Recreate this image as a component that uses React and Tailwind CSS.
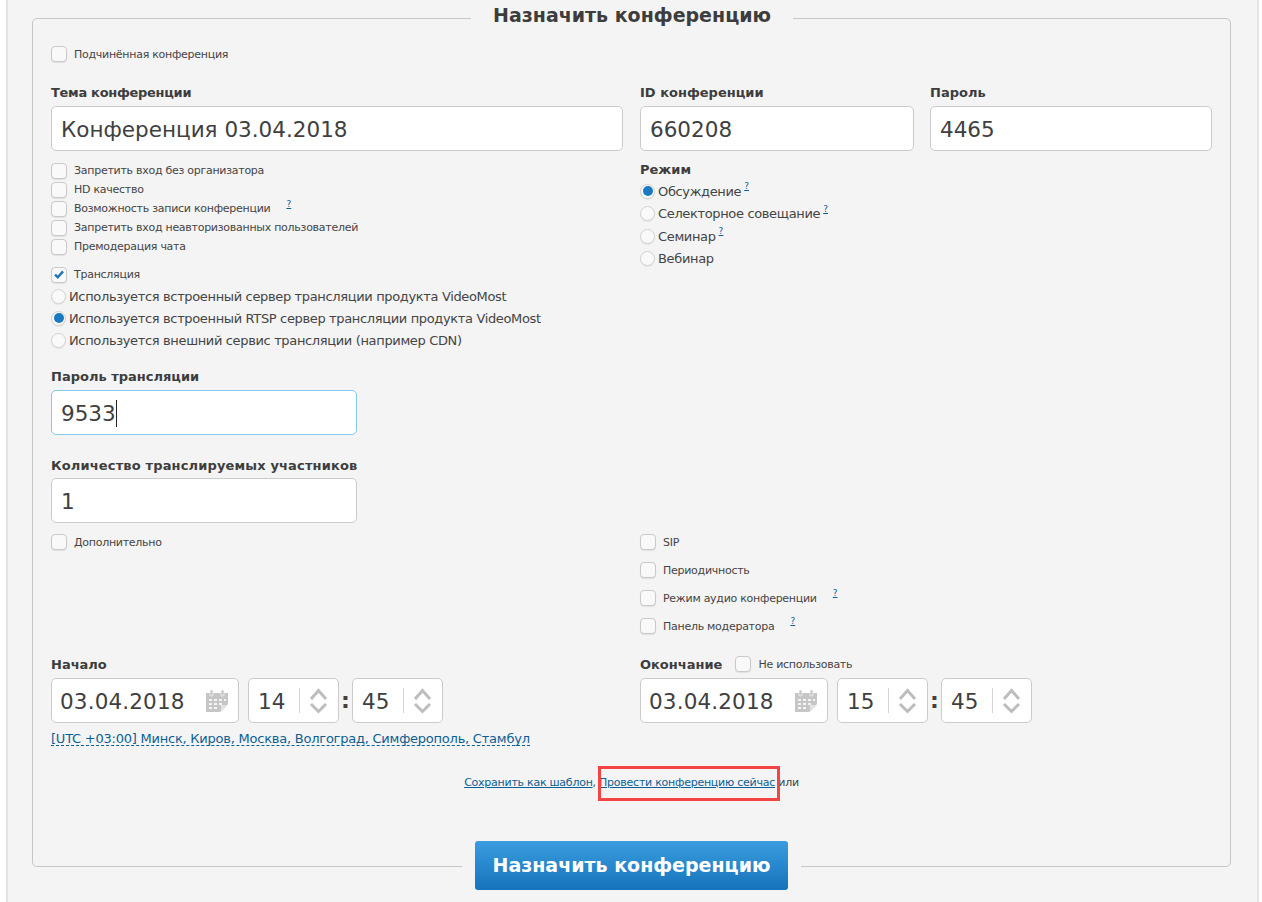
const font = { fontFamily: '"DejaVu Sans", Verdana, sans-serif' };

function Check({ label, checked, help, helpGap = 'ml-[16px]', h = 'h-[19px]' }) {
  return (
    <div className={`flex items-center ${h}`}>
      <span className="flex h-[16px] w-[16px] shrink-0 items-center justify-center rounded-[4px] border border-[#c9c9c9] bg-[#f9f9f9] shadow-[0_1px_1px_rgba(0,0,0,0.08)]">
        {checked && (
          <svg width="10" height="9" viewBox="0 0 10 9">
            <path d="M1 4.6 L3.8 7.2 L9 1.4" fill="none" stroke="#1c76bc" strokeWidth="2.4" />
          </svg>
        )}
      </span>
      <span className="ml-[7px] text-[11px] leading-none tracking-[-0.27px] text-[#444]">{label}</span>
      {help && <Help className={helpGap} />}
    </div>
  );
}

function Help({ className = '' }) {
  return <a className={`mb-[9px] text-[9px] leading-none text-[#0b5f96] underline ${className}`}>?</a>;
}

function Radio({ label, checked, help, h = 'h-[22px]' }) {
  return (
    <div className={`flex items-center ${h}`}>
      <span className="flex h-[15px] w-[15px] shrink-0 items-center justify-center rounded-full border border-[#d2d2d2] bg-[#f9f9f9] shadow-[0_1px_1px_rgba(0,0,0,0.06)]">
        {checked && <span className="h-[10px] w-[10px] rounded-full bg-[#1b79c2]" />}
      </span>
      <span className="ml-[3px] text-[13px] leading-none tracking-[-0.35px] text-[#444]">{label}</span>
      {help && <Help className="ml-[3px]" />}
    </div>
  );
}

function Label({ children, className = '' }) {
  return <div className={`h-[16px] text-[13px] font-bold leading-[18px] text-[#3d3d3d] ${className}`}>{children}</div>;
}

function Field({ value, className = '', caret, focused }) {
  return (
    <div
      className={`flex h-[45px] items-center rounded-[5px] border bg-white pl-[9px] pt-[4px] text-[21.5px] text-[#404040] ${
        focused ? 'border-[#85c9f2]' : 'border-[#cbcbcb]'
      } ${className}`}
    >
      {value}
      {caret && <span className="mb-[3px] h-[27px] w-px bg-[#222]" />}
    </div>
  );
}

function Calendar() {
  return (
    <svg width="24" height="24" viewBox="0 0 24 24" className="shrink-0">
      <path d="M1 4 H23 V15 L15 23 H1 Z" fill="#c6c6c6" />
      <path d="M16 23 L23 16 H16 Z" fill="#e2e2e2" />
      <rect x="5" y="1" width="3" height="6" rx="1" fill="#c6c6c6" stroke="#f4f4f4" strokeWidth="0.8" />
      <rect x="16" y="1" width="3" height="6" rx="1" fill="#c6c6c6" stroke="#f4f4f4" strokeWidth="0.8" />
      <path
        d="M4 10h3v2H4zM9 10h3v2H9zM14 10h3v2h-3zM19 10h2v2h-2zM4 14h3v2H4zM9 14h3v2H9zM14 14h3v2h-3zM4 18h3v2H4zM9 18h3v2H9z"
        fill="#f4f4f4"
      />
    </svg>
  );
}

function Spinner() {
  return (
    <svg width="19" height="26" viewBox="0 0 19 26" className="shrink-0">
      <path d="M2 11 L9.5 2.5 L17 11" fill="none" stroke="#bdbdbd" strokeWidth="3" />
      <path d="M2 16 L9.5 23.5 L17 16" fill="none" stroke="#bdbdbd" strokeWidth="3" />
    </svg>
  );
}

function Time({ value }) {
  return (
    <div className="flex h-[45px] w-[91px] items-center rounded-[5px] border border-[#cbcbcb] bg-white pl-[9px] text-[21.5px] text-[#404040]">
      <span className="w-[41px] pt-[3px]">{value}</span>
      <span className="h-[25px] w-px bg-[#d4d4d4]" />
      <span className="ml-[9px] flex">
        <Spinner />
      </span>
    </div>
  );
}

function DateTime({ date, h, m }) {
  return (
    <div className="mt-[6px] flex items-center">
      <div className="flex h-[45px] w-[188px] items-center justify-between rounded-[5px] border border-[#cbcbcb] bg-white pl-[8px] pr-[9px] text-[21.5px] tracking-[0.15px] text-[#404040]">
        <span className="pt-[3px]">{date}</span>
        <Calendar />
      </div>
      <span className="w-[9px]" />
      <Time value={h} />
      <span className="w-[13px] text-center text-[22px] font-bold leading-none text-[#404040]">:</span>
      <Time value={m} />
    </div>
  );
}

export default function App() {
  return (
    <div style={font} className="h-[902px] w-[1262px] overflow-hidden bg-white">
      <div className="ml-[6px] mr-[3px] h-[902px] border-x-2 border-[#e4e4e4] bg-[#f4f4f4] pt-[18px] pl-[24px]">
        <div className="relative h-[849px] w-[1199px] rounded-[5px] border border-[#c6c6c6] px-[18px] pt-[27px]">
          <div className="absolute -top-[17px] left-[438px] bg-[#f4f4f4] px-[22px] text-[19px] font-bold leading-[26px] text-[#3d3d3d]">
            Назначить конференцию
          </div>

          <Check label="Подчинённая конференция" h="h-[16px]" />

          <div className="mt-[22px] flex">
            <div className="w-[572px]">
              <Label className="tracking-[-0.3px]">Тема конференции</Label>
              <Field value="Конференция 03.04.2018" className="mt-[6px] w-[572px]" />
              <div className="mt-[10px]">
                <Check label="Запретить вход без организатора" />
                <Check label="HD качество" />
                <Check label="Возможность записи конференции" help />
                <Check label="Запретить вход неавторизованных пользователей" />
                <Check label="Премодерация чата" />
              </div>
              <div className="mt-[9px]">
                <Check label="Трансляция" checked />
                <div className="mt-px">
                  <Radio label="Используется встроенный сервер трансляции продукта VideoMost" />
                  <Radio label="Используется встроенный RTSP сервер трансляции продукта VideoMost" checked />
                  <Radio label="Используется внешний сервис трансляции (например CDN)" />
                </div>
              </div>
              <Label className="mt-[17px]">Пароль трансляции</Label>
              <Field value="9533" caret focused className="mt-[6px] w-[306px]" />
              <Label className="mt-[22px] tracking-[0.15px]">Количество транслируемых участников</Label>
              <Field value="1" className="mt-[5px] w-[306px]" />
            </div>

            <div className="ml-[17px] w-[572px]">
              <div className="flex gap-[16px]">
                <div className="w-[274px]">
                  <Label>ID конференции</Label>
                  <Field value="660208" className="mt-[6px]" />
                </div>
                <div className="w-[282px]">
                  <Label>Пароль</Label>
                  <Field value="4465" className="mt-[6px]" />
                </div>
              </div>
              <Label className="mt-[10px]">Режим</Label>
              <div className="mt-[3px]">
                <Radio label="Обсуждение" checked help h="h-[22.5px]" />
                <Radio label="Селекторное совещание" help h="h-[22.5px]" />
                <Radio label="Семинар" help h="h-[22.5px]" />
                <Radio label="Вебинар" h="h-[22.5px]" />
              </div>
            </div>
          </div>

          <div className="mt-[5px] flex">
            <div className="w-[589px]">
              <Check label="Дополнительно" h="h-[28px]" />
            </div>
            <div>
              <Check label="SIP" h="h-[28px]" />
              <Check label="Периодичность" h="h-[28px]" />
              <Check label="Режим аудио конференции" help h="h-[28px]" />
              <Check label="Панель модератора" help h="h-[28px]" />
            </div>
          </div>

          <div className="mt-[16px] flex">
            <div className="w-[589px]">
              <Label>Начало</Label>
              <DateTime date="03.04.2018" h="14" m="45" />
              <a className="mt-[10px] inline-block border-b border-dashed border-[#0b5f96] text-[13px] leading-[12px] tracking-[-0.23px] text-[#0b5f96]">
                [UTC +03:00] Минск, Киров, Москва, Волгоград, Симферополь, Стамбул
              </a>
            </div>
            <div>
              <div className="flex h-[16px] items-center">
                <Label>Окончание</Label>
                <span className="ml-[13px]">
                  <Check label="Не использовать" h="h-[16px]" />
                </span>
              </div>
              <DateTime date="03.04.2018" h="15" m="45" />
            </div>
          </div>

          <div className="mt-[25px] flex justify-center text-[11px] leading-[16px] tracking-[-0.25px] text-[#444]">
            <span>
              <a className="text-[#0b5f96] underline">Сохранить как шаблон</a>,{' '}
              <a className="text-[#0b5f96] underline">Провести конференцию сейчас</a> или
            </span>
          </div>

          <div className="absolute left-[565px] top-[747px] h-[35px] w-[182px] border-[3px] border-[#f44444]" />

          <div className="absolute -bottom-[24px] left-[429px] bg-[#f4f4f4] px-[13px]">
            <button className="h-[49px] w-[313px] rounded-[3px] bg-gradient-to-b from-[#399ddf] to-[#1573bb] text-[19px] font-bold text-white">
              Назначить конференцию
            </button>
          </div>
        </div>
      </div>
    </div>
  );
}
